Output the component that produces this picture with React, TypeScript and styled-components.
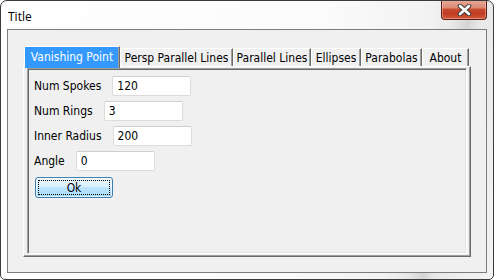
import React from "react";
import styled, { createGlobalStyle } from "styled-components";

const GlobalStyle = createGlobalStyle`
  html, body {
    margin: 0;
    padding: 0;
    background: #ffffff;
  }
`;

const Window = styled.div`
  width: 494px;
  height: 280px;
  box-sizing: border-box;
  border: 1px solid #3b3b3b;
  border-radius: 7px 7px 5px 5px;
  padding: 0 6px 6px;
  display: flex;
  flex-direction: column;
  overflow: hidden;
  background:
    linear-gradient(
      100deg,
      #ffffff 0%,
      #fbfbfb 60%,
      #f2f2f2 80%,
      #e9e9e9 84%,
      #d4d4d4 87%,
      #e8e8e8 89%,
      #f4f4f4 100%
    );
`;

const TitleBar = styled.div`
  height: 28px;
  display: flex;
  justify-content: space-between;
  align-items: flex-start;
`;

const TitleText = styled.span`
  margin: 7px 0 0 1px;
  font-family: "Open Sans", "Noto Sans", sans-serif;
  font-size: 12px;
  color: #000;
`;

const CloseButton = styled.div`
  width: 46px;
  height: 20px;
  margin-top: -1px;
  box-sizing: border-box;
  border: 1px solid #5a1d12;
  border-top: none;
  border-radius: 0 0 4px 4px;
  display: flex;
  align-items: center;
  justify-content: center;
  background: linear-gradient(
    to bottom,
    #e9a897 0%,
    #dc8b75 40%,
    #c74a2f 50%,
    #c03b22 70%,
    #d0583b 100%
  );
  box-shadow: inset 0 0 0 1px rgba(255, 210, 200, 0.45);
`;

const Client = styled.div`
  flex: 1;
  border: 1px solid #7c7c7c;
  background: #f0f0f0;
  padding: 15px;
  display: flex;
  flex-direction: column;
  font-family: "DejaVu Sans", "Liberation Sans", sans-serif;
  font-stretch: condensed;
  font-size: 12px;
`;

const TabStrip = styled.div`
  height: 21px;
  display: flex;
  align-items: flex-end;
  padding-left: 1px;
`;

const Tab = styled.div<{ $active?: boolean; $width: number }>`
  position: relative;
  z-index: ${(p) => (p.$active ? 1 : 0)};
  flex-shrink: 0;
  width: ${(p) => p.$width}px;
  height: ${(p) => (p.$active ? "22px" : "18px")};
  margin-bottom: ${(p) => (p.$active ? "-2px" : "0")};
  padding-bottom: ${(p) => (p.$active ? "2px" : "0")};
  box-sizing: border-box;
  display: flex;
  align-items: center;
  justify-content: center;
  border-top: 1px solid #ffffff;
  border-left: 1px solid #ffffff;
  border-right: 1px solid #696969;
  box-shadow: inset -1px 0 0 #a0a0a0;
  background: ${(p) => (p.$active ? "#3399ff" : "#f0f0f0")};
  color: ${(p) => (p.$active ? "#ffffff" : "#000000")};
  white-space: nowrap;
`;

const Panel = styled.div`
  flex: 1;
  display: flex;
  border-top: 1px solid #ffffff;
  border-left: 1px solid #ffffff;
  border-right: 1px solid #696969;
  border-bottom: 1px solid #696969;
  box-shadow: inset -1px -1px 0 #a0a0a0;
  padding: 1px 3px 2px 3px;
`;

const Page = styled.div`
  flex: 1;
  border-top: 1px solid #a0a0a0;
  border-left: 1px solid #a0a0a0;
  border-right: 1px solid #ffffff;
  border-bottom: 1px solid #ffffff;
  box-shadow: inset 1px 1px 0 #696969, inset -1px -1px 0 #e3e3e3;
  padding: 7px 6px;
  display: flex;
  flex-direction: column;
  align-items: flex-start;
  gap: 5px;
`;

const Row = styled.div`
  display: flex;
  align-items: center;
  gap: 10px;
`;

const Label = styled.span`
  color: #000;
`;

const TextBox = styled.input`
  width: 79px;
  height: 20px;
  margin-left: 1px;
  box-sizing: border-box;
  border: 1px solid #dcdcdc;
  border-top-color: #cfcfcf;
  border-radius: 2px;
  background: #ffffff;
  padding: 0 4px;
  font: inherit;
  color: #000;
  outline: none;
`;

const OkButton = styled.button`
  margin: 1px 0 0 1px;
  width: 78px;
  height: 21px;
  box-sizing: border-box;
  border: 1px solid #3c7fb1;
  border-radius: 3px;
  padding: 2px;
  font: inherit;
  color: #000;
  background: linear-gradient(
    to bottom,
    #eaf6fd 0%,
    #d9f0fc 45%,
    #bee6fd 50%,
    #a7d9f5 100%
  );
  box-shadow: inset 0 0 0 1px rgba(255, 255, 255, 0.6);
  display: flex;
`;

const FocusRing = styled.span`
  flex: 1;
  border: 1px dotted #000;
  display: flex;
  align-items: center;
  justify-content: center;
  line-height: 1;
`;

const CloseGlyph = () => (
  <svg width="15" height="12" viewBox="0 0 15 12">
    <path
      d="M3 2 L12 10 M12 2 L3 10"
      stroke="#3d3d3d"
      strokeWidth="4.6"
      strokeLinecap="round"
    />
    <path
      d="M3 2 L12 10 M12 2 L3 10"
      stroke="#ffffff"
      strokeWidth="2.6"
      strokeLinecap="round"
    />
  </svg>
);

const tabs = [
  { label: "Vanishing Point", width: 96 },
  { label: "Persp Parallel Lines", width: 113 },
  { label: "Parallel Lines", width: 78 },
  { label: "Ellipses", width: 50 },
  { label: "Parabolas", width: 61 },
  { label: "About", width: 47 },
];

const fields = [
  { label: "Num Spokes", value: "120" },
  { label: "Num Rings", value: "3" },
  { label: "Inner Radius", value: "200" },
  { label: "Angle", value: "0" },
];

const App = () => (
  <>
    <GlobalStyle />
    <Window>
      <TitleBar>
        <TitleText>Title</TitleText>
        <CloseButton>
          <CloseGlyph />
        </CloseButton>
      </TitleBar>
      <Client>
        <TabStrip>
          {tabs.map((t, i) => (
            <Tab key={t.label} $active={i === 0} $width={t.width}>
              {t.label}
            </Tab>
          ))}
        </TabStrip>
        <Panel>
          <Page>
            {fields.map((f) => (
              <Row key={f.label}>
                <Label>{f.label}</Label>
                <TextBox defaultValue={f.value} />
              </Row>
            ))}
            <OkButton>
              <FocusRing>Ok</FocusRing>
            </OkButton>
          </Page>
        </Panel>
      </Client>
    </Window>
  </>
);

export default App;
